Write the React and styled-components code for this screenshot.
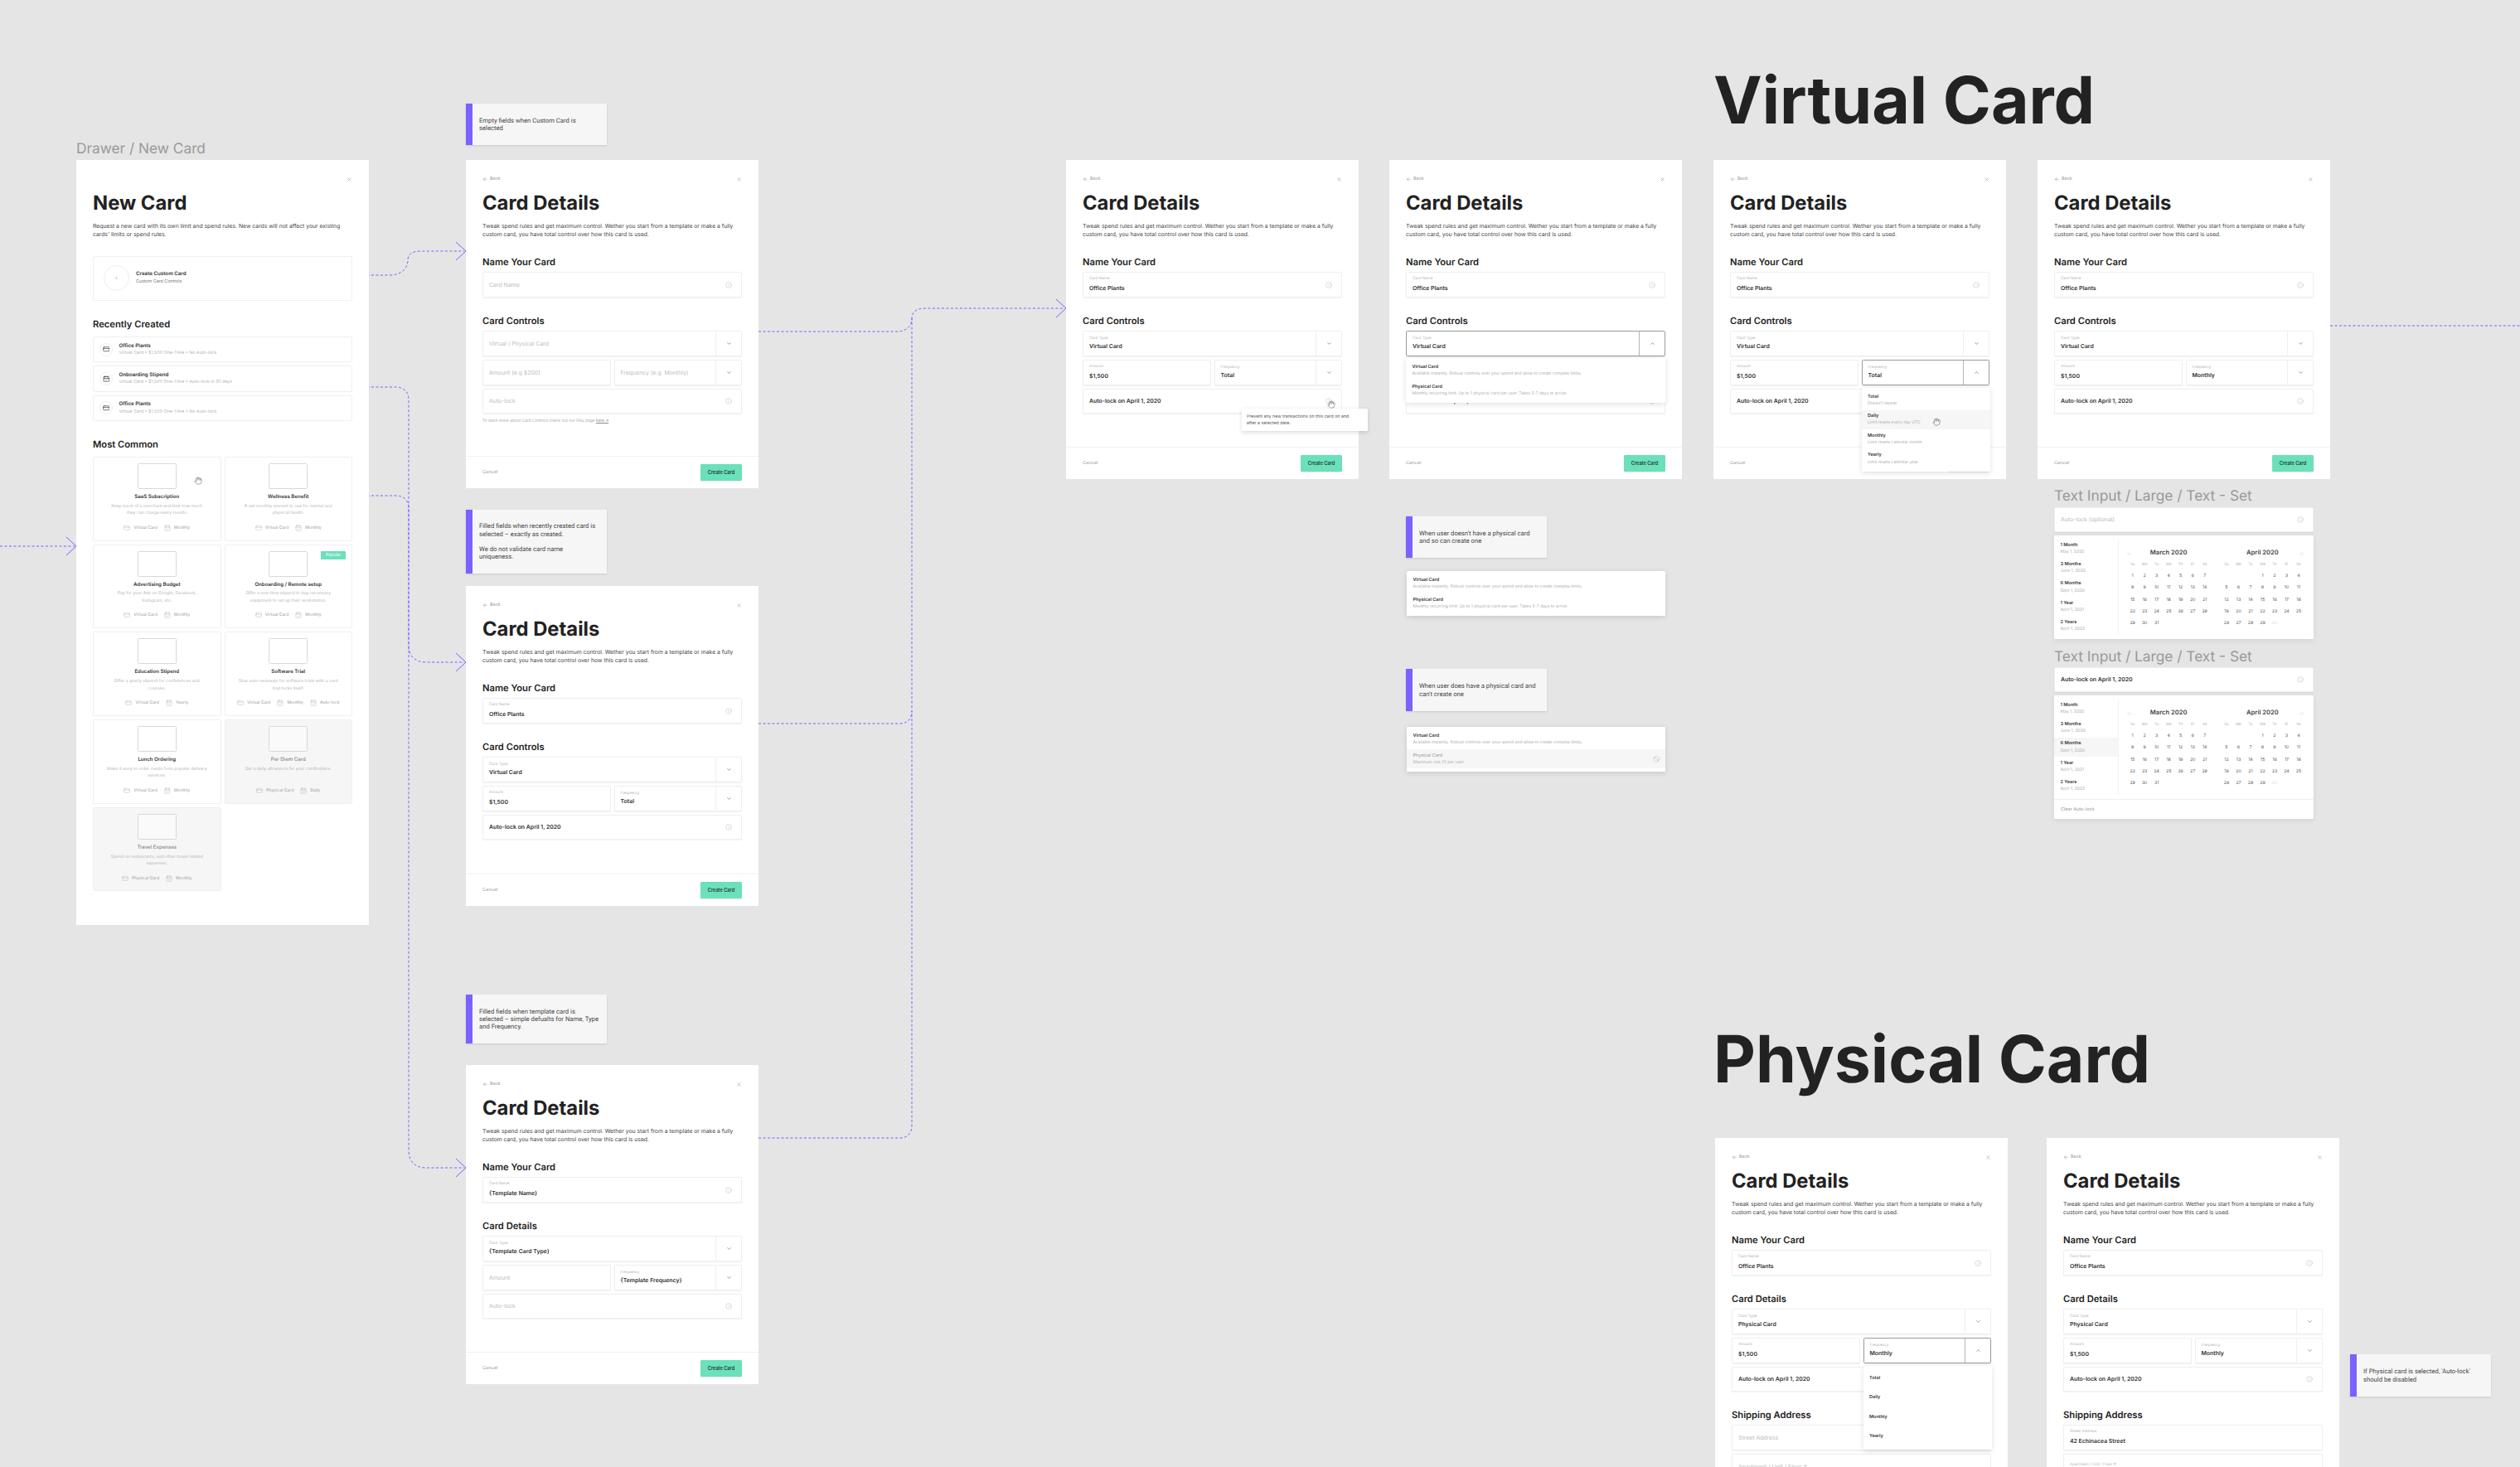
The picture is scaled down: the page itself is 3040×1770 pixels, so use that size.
import React from "react";
import styled, { createGlobalStyle } from "styled-components";
import {
  ArrowLeft,
  ArrowRight,
  Ban,
  CalendarCheck,
  ChevronDown,
  ChevronUp,
  CreditCard,
  Hand,
  Info,
  Plus,
  X,
} from "lucide-react";

const GlobalStyle = createGlobalStyle`
  html, body {
    margin: 0;
    padding: 0;
    background: #e5e5e5;
  }
  body {
    font-family: "Inter", "Liberation Sans", sans-serif;
    color: #222;
    text-rendering: geometricPrecision;
  }
`;

// the page is a Figma board, so frames sit at their own spot on it
const Canvas = styled.div`
  position: relative;
  width: 3040px;
  height: 1770px;
  overflow: hidden;
  background: #e5e5e5;
`;

const Wires = styled.svg`
  position: absolute;
  inset: 0;
`;

const BoardTitle = styled.h1`
  position: absolute;
  left: ${(p) => p.$x}px;
  top: ${(p) => p.$y}px;
  margin: 0;
  font-size: 78.6px;
  line-height: 100px;
  font-weight: 700;
  color: #222;
  white-space: nowrap;
`;

const FrameLabel = styled.div`
  position: absolute;
  left: ${(p) => p.$x}px;
  top: ${(p) => p.$y}px;
  font-size: 17.3px;
  line-height: 22px;
  color: #999;
  white-space: nowrap;
`;

const Note = styled.div`
  position: absolute;
  left: ${(p) => p.$x}px;
  top: ${(p) => p.$y}px;
  width: 170px;
  height: ${(p) => p.$h}px;
  box-sizing: border-box;
  display: flex;
  flex-direction: column;
  justify-content: center;
  padding-left: 8px;
  background: #f6f6f6;
  border-left: 8px solid #7b61ff;
  box-shadow: 0 1px 2px rgba(0, 0, 0, 0.12);
  font-family: "Roboto", "Liberation Sans", sans-serif;
  font-size: 7.7px;
  line-height: 9.3px;
  color: #444;
  white-space: pre-line;
`;

const Drawer = styled.section`
  position: absolute;
  left: ${(p) => p.$x}px;
  top: ${(p) => p.$y}px;
  width: 353px;
  height: ${(p) => p.$h}px;
  box-sizing: border-box;
  display: flex;
  flex-direction: column;
  padding: 18px 20px 0;
  background: #fff;
`;

const TopBar = styled.div`
  display: flex;
  align-items: center;
  justify-content: ${(p) => (p.$end ? "flex-end" : "space-between")};
  height: 10px;
  color: #999;
  font-size: 5.5px;
`;

const BackLink = styled.span`
  display: flex;
  align-items: center;
  gap: 2.5px;
  color: #999;
`;

const Title = styled.h2`
  margin: 9px 0 0;
  font-size: 23.8px;
  line-height: 30px;
  font-weight: 700;
  color: #222;
`;

const Lead = styled.p`
  margin: 7.7px 0 0;
  font-size: 6.8px;
  line-height: 10.67px;
  color: #444;
  white-space: pre-line;
`;

const SectionHead = styled.h3`
  margin: ${(p) => p.$top ?? 21}px 0 ${(p) => p.$bottom ?? 5}px;
  font-size: 11.2px;
  line-height: 14px;
  font-weight: 600;
  color: #222;
`;

const Stack = styled.div`
  display: flex;
  flex-direction: column;
  gap: 4px;
`;

const Row = styled.div`
  display: grid;
  grid-template-columns: minmax(0, 1fr) minmax(0, 1fr);
  gap: 4px;
`;

const FieldBox = styled.div`
  flex: none;
  height: ${(p) => p.$h ?? 31}px;
  box-sizing: border-box;
  display: flex;
  align-items: stretch;
  background: #fff;
  border: 1px solid ${(p) => (p.$open ? "#9a9a9a" : "#efefef")};
  border-radius: 1.5px;
  box-shadow: 0 0.5px 1px rgba(0, 0, 0, 0.06);
`;

const FieldText = styled.div`
  flex: 1;
  min-width: 0;
  display: flex;
  flex-direction: column;
  justify-content: center;
  gap: ${(p) => (p.$tight ? 0.2 : 2.2)}px;
  padding: 0 7px 1px;
`;

const FieldLabel = styled.span`
  font-size: 4.6px;
  line-height: 6px;
  color: #b5b5b5;
`;

const FieldValue = styled.span`
  font-size: 6.9px;
  line-height: 9px;
  font-weight: 600;
  color: #333;
  white-space: nowrap;
`;

const Placeholder = styled.span`
  font-size: 6.9px;
  line-height: 9px;
  color: #bdbdbd;
  white-space: nowrap;
`;

const FieldSlot = styled.div`
  flex: 0 0 30px;
  display: flex;
  align-items: center;
  justify-content: center;
  color: ${(p) => (p.$muted ? "#aaa" : "#555")};
  border-left: ${(p) =>
    p.$divider ? `1px solid ${p.$open ? "#b5b5b5" : "#efefef"}` : "none"};
`;

const Hint = styled.p`
  margin: 5.5px 0 0;
  font-size: 4.85px;
  line-height: 6px;
  color: #aaa;

  u {
    color: #888;
  }
`;

const Footer = styled.footer`
  margin: auto -20px 0;
  height: 39.3px;
  box-sizing: border-box;
  display: flex;
  align-items: center;
  justify-content: space-between;
  padding: 0 20px;
  border-top: 1px solid #f1f1f1;
`;

const CancelLink = styled.span`
  font-size: 5.6px;
  color: #999;
`;

const CreateButton = styled.button`
  width: 50px;
  height: 19.5px;
  padding: 0;
  border: none;
  border-radius: 1.5px;
  background: #6be0bb;
  box-shadow: 0 0.5px 1px rgba(0, 0, 0, 0.1);
  font-family: inherit;
  font-size: 5.6px;
  font-weight: 600;
  color: #1f3d33;
`;

const Menu = styled.div`
  width: ${(p) => p.$w ?? 155}px;
  box-sizing: border-box;
  padding: 3.3px 0;
  background: #fff;
  border-radius: 1.5px;
  box-shadow: 0 1.5px 6px rgba(0, 0, 0, 0.12);
`;

const BoardMenu = styled(Menu)`
  position: absolute;
  left: ${(p) => p.$x}px;
  top: ${(p) => p.$y}px;
`;

const Popover = styled(Menu)`
  position: absolute;
  left: ${(p) => p.$x}px;
  top: ${(p) => p.$y}px;
  z-index: 2;
`;

const MenuRow = styled.div`
  height: 23.6px;
  box-sizing: border-box;
  display: flex;
  align-items: center;
  justify-content: space-between;
  padding: 0 7.5px;
  background: ${(p) => (p.$shaded ? "#f6f6f6" : "transparent")};
  color: #999;
`;

const MenuText = styled.div`
  display: flex;
  flex-direction: column;
  gap: 1.7px;
`;

const MenuTitle = styled.span`
  font-size: 5.5px;
  line-height: 6.5px;
  font-weight: ${(p) => (p.$off ? 400 : 600)};
  color: ${(p) => (p.$off ? "#999" : "#333")};
`;

const MenuSub = styled.span`
  font-size: 5px;
  line-height: 6px;
  color: #b0b0b0;
  white-space: nowrap;
`;

const Tooltip = styled.div`
  position: absolute;
  left: 212px;
  top: 300px;
  z-index: 2;
  width: 152px;
  height: 27px;
  box-sizing: border-box;
  padding: 5.5px 6px;
  background: #fff;
  border-radius: 1px;
  box-shadow: 0 1.5px 5px rgba(0, 0, 0, 0.14);
  font-size: 5.3px;
  line-height: 8.2px;
  color: #555;
`;

const Cursor = styled.span`
  position: absolute;
  left: ${(p) => p.$x}px;
  top: ${(p) => p.$y}px;
  z-index: 3;
  display: flex;
  color: #555;
`;

// new card drawer

const CustomBox = styled.div`
  height: 54px;
  flex: none;
  margin-top: 19.7px;
  box-sizing: border-box;
  display: flex;
  align-items: center;
  gap: 8.5px;
  padding-left: 11.5px;
  border: 1px solid #efefef;
  border-radius: 1.5px;
`;

const PlusCircle = styled.span`
  width: 31px;
  height: 31px;
  box-sizing: border-box;
  display: flex;
  align-items: center;
  justify-content: center;
  border: 1px solid #eee;
  border-radius: 50%;
  color: #aaa;
`;

const TwoLines = styled.div`
  display: flex;
  flex-direction: column;
  gap: ${(p) => p.$gap ?? 2.5}px;
`;

const ItemTitle = styled.span`
  font-size: 6.2px;
  line-height: 7px;
  font-weight: 600;
  color: #333;
`;

const ItemSub = styled.span`
  font-size: 5.3px;
  line-height: 7px;
  color: ${(p) => p.$color ?? "#b5b5b5"};
`;

const RecentItem = styled.div`
  height: 31.4px;
  box-sizing: border-box;
  display: flex;
  align-items: center;
  gap: 7.5px;
  padding-left: 7px;
  border: 1px solid #efefef;
  border-radius: 1.5px;
`;

const RecentIcon = styled.span`
  width: 16px;
  height: 16px;
  box-sizing: border-box;
  display: flex;
  align-items: center;
  justify-content: center;
  border: 1px solid #eee;
  border-radius: 50%;
  color: #333;
`;

const TemplateGrid = styled.div`
  display: grid;
  grid-template-columns: 1fr 1fr;
  grid-auto-rows: 101.7px;
  gap: 4px;
`;

const TemplateCard = styled.div`
  position: relative;
  display: flex;
  flex-direction: column;
  align-items: center;
  padding-top: 7px;
  box-sizing: border-box;
  background: ${(p) => (p.$off ? "#f6f6f6" : "#fff")};
  border: 1px solid #efefef;
  border-radius: 1.5px;
`;

const Thumb = styled.div`
  width: 47px;
  height: 31px;
  box-sizing: border-box;
  background: ${(p) => (p.$off ? "#fafafa" : "#fff")};
  border: 1px solid #d8d8d8;
  border-radius: 1.5px;
`;

const TemplateName = styled.div`
  margin-top: 6px;
  font-size: 6.1px;
  line-height: 8px;
  font-weight: ${(p) => (p.$off ? 500 : 600)};
  color: ${(p) => (p.$off ? "#888" : "#333")};
`;

const TemplateDesc = styled.div`
  height: 17px;
  margin-top: 2.8px;
  font-size: 5.15px;
  line-height: 8.4px;
  color: #b5b5b5;
  text-align: center;
  white-space: pre-line;
`;

const TemplateMeta = styled.div`
  display: flex;
  gap: 8px;
  margin-top: 9px;
`;

const MetaItem = styled.span`
  display: flex;
  align-items: center;
  gap: 4px;
  font-size: 5.1px;
  color: #999;
  white-space: nowrap;
`;

const PopularBadge = styled.span`
  position: absolute;
  top: 7px;
  right: 7px;
  width: 30px;
  height: 10px;
  display: flex;
  align-items: center;
  justify-content: center;
  background: #6be0bb;
  border-radius: 1px;
  font-size: 5px;
  color: #fff;
`;

// auto-lock date picker

const CalendarPanel = styled.div`
  position: absolute;
  left: ${(p) => p.$x}px;
  top: ${(p) => p.$y}px;
  width: 313px;
  background: #fff;
  border-radius: 1.5px;
  box-shadow: 0 1.5px 6px rgba(0, 0, 0, 0.08);
`;

const InputSlot = styled.div`
  position: absolute;
  left: ${(p) => p.$x}px;
  top: ${(p) => p.$y}px;
  width: 313px;
`;

const CalendarBody = styled.div`
  display: flex;
  height: 125px;
  box-sizing: border-box;
  padding: 4px 0;
`;

const Presets = styled.div`
  flex: 0 0 78px;
  box-sizing: border-box;
  display: flex;
  flex-direction: column;
  border-right: 1px solid #f3f3f3;
`;

const Preset = styled.div`
  height: 23.5px;
  box-sizing: border-box;
  display: flex;
  flex-direction: column;
  justify-content: center;
  gap: 1.7px;
  padding-left: 7.5px;
  background: ${(p) => (p.$on ? "#f6f6f6" : "transparent")};
`;

const Months = styled.div`
  flex: 1;
  display: flex;
  gap: 11.8px;
  padding: 6px 0 0 9.4px;
`;

const Month = styled.div`
  width: 101.5px;
`;

const MonthHead = styled.div`
  display: grid;
  grid-template-columns: 8px 1fr 8px;
  align-items: center;
  height: 17px;
  color: #ccc;
  margin-bottom: 1px;
`;

const MonthName = styled.span`
  font-size: 7.6px;
  font-weight: 600;
  text-align: center;
  color: #444;
`;

const DayGrid = styled.div`
  display: grid;
  grid-template-columns: repeat(7, 14.5px);
  grid-auto-rows: 14.2px;
  align-items: center;
  justify-items: center;
`;

const WeekDay = styled.span`
  font-size: 4.4px;
  color: #b5b5b5;
`;

const Day = styled.span`
  font-size: 5.2px;
  color: ${(p) => (p.$off ? "#ddd" : "#555")};
`;

const ClearRow = styled.div`
  height: 24px;
  box-sizing: border-box;
  display: flex;
  align-items: center;
  padding-left: 8px;
  border-top: 1px solid #efefef;
  font-size: 5.5px;
  color: #999;
`;

const templates = [
  { name: "SaaS Subscription", desc: "Keep track of a merchant and limit how much\nthey can charge every month.", meta: ["Virtual Card", "Monthly"] },
  { name: "Wellness Benefit", desc: "A set monthly amount to use for mental and\nphysical health.", meta: ["Virtual Card", "Monthly"] },
  { name: "Advertising Budget", desc: "Pay for your Ads on Google, Facebook,\nInstagram, etc.", meta: ["Virtual Card", "Monthly"] },
  { name: "Onboarding / Remote setup", desc: "Offer a one-time stipend to buy necessary\nequipment to set up their workstation.", meta: ["Virtual Card", "Monthly"], popular: true },
  { name: "Education Stipend", desc: "Offer a yearly stipend for conferences and\ncourses.", meta: ["Virtual Card", "Yearly"] },
  { name: "Software Trial", desc: "Stop auto-renewals for software trials with a card\nthat locks itself.", meta: ["Virtual Card", "Monthly", "Auto-lock"] },
  { name: "Lunch Ordering", desc: "Make it easy to order meals from popular delivery\nservices.", meta: ["Virtual Card", "Monthly"] },
  { name: "Per Diem Card", desc: "Set a daily allowance for your cardholders.", meta: ["Physical Card", "Daily"], off: true },
  { name: "Travel Expenses", desc: "Spend on restaurants, and other travel related\nexpenses.", meta: ["Physical Card", "Monthly"], off: true },
];

const recents = [
  { name: "Office Plants", sub: "Virtual Card • $1,500 One-Time • No Auto-lock", Icon: CreditCard },
  { name: "Onboarding Stipend", sub: "Virtual Card • $1,500 One-Time • Auto-lock in 30 days", Icon: CalendarCheck },
  { name: "Office Plants", sub: "Virtual Card • $1,500 One-Time • No Auto-lock", Icon: CreditCard },
];

const presets = [
  ["1 Month", "May 1, 2020"],
  ["3 Months", "June 1, 2020"],
  ["6 Months", "Sept 1, 2020"],
  ["1 Year", "April 1, 2021"],
  ["2 Years", "April 1, 2022"],
];

const frequencies = [
  ["Total", "Doesn't repeat"],
  ["Daily", "Limit resets every day UTC"],
  ["Monthly", "Limit resets calendar month"],
  ["Yearly", "Limit resets calendar year"],
];

const LEAD =
  "Tweak spend rules and get maximum control. Wether you start from a template or make a fully\ncustom card, you have total control over how this card is used.";
const WEEK = ["Su", "Mo", "Tu", "We", "Th", "Fr", "Sa"];

const Field = ({ label, value, placeholder, select, open, info, tight, h }) => (
  <FieldBox $open={open} $h={h}>
    <FieldText $tight={tight ?? select}>
      {label && <FieldLabel>{label}</FieldLabel>}
      {value && <FieldValue>{value}</FieldValue>}
      {placeholder && <Placeholder>{placeholder}</Placeholder>}
    </FieldText>
    {select && (
      <FieldSlot $divider $open={open}>
        {open ? <ChevronUp size={7} /> : <ChevronDown size={7} />}
      </FieldSlot>
    )}
    {info && (
      <FieldSlot $muted>
        <Info size={8} strokeWidth={1.2} />
      </FieldSlot>
    )}
  </FieldBox>
);

const ControlFields = ({ type, amount, frequency, auto, typeOpen, freqOpen }) => (
  <Stack>
    <Field select open={typeOpen} {...type} />
    <Row>
      <Field tight={false} {...amount} />
      <Field select open={freqOpen} {...frequency} />
    </Row>
    <Field info h={30} {...auto} />
  </Stack>
);

const filled = {
  name: { label: "Card Name", value: "Office Plants" },
  type: { label: "Card Type", value: "Virtual Card" },
  amount: { label: "Amount", value: "$1,500" },
  total: { label: "Frequency", value: "Total" },
  monthly: { label: "Frequency", value: "Monthly" },
  auto: { value: "Auto-lock on April 1, 2020" },
};

const CardDetails = ({ x, y, h = 385, name, section = "Card Controls", type, amount, frequency, auto, hint, typeOpen, freqOpen, footer = true, showCreate = true, children }) => (
  <Drawer $x={x} $y={y} $h={h}>
    <TopBar>
      <BackLink>
        <ArrowLeft size={6.5} />
        Back
      </BackLink>
      <X size={7} />
    </TopBar>
    <Title>Card Details</Title>
    <Lead>{LEAD}</Lead>
    <SectionHead $top={20}>Name Your Card</SectionHead>
    <Field info {...name} />
    <SectionHead>{section}</SectionHead>
    <ControlFields
      type={type}
      amount={amount}
      frequency={frequency}
      auto={auto}
      typeOpen={typeOpen}
      freqOpen={freqOpen}
    />
    {hint && (
      <Hint>
        To learn more about Card Controls check out our FAQ page <u>here ↗</u>
      </Hint>
    )}
    {children}
    {footer && (
      <Footer>
        <CancelLink>Cancel</CancelLink>
        {showCreate && <CreateButton>Create Card</CreateButton>}
      </Footer>
    )}
  </Drawer>
);

const NewCardDrawer = () => (
  <Drawer $x={92} $y={193} $h={923}>
    <TopBar $end>
      <X size={7} />
    </TopBar>
    <Title>New Card</Title>
    <Lead>
      {"Request a new card with its own limit and spend rules. New cards will not affect your existing\ncards' limits or spend rules."}
    </Lead>
    <CustomBox>
      <PlusCircle>
        <Plus size={7} strokeWidth={1.2} />
      </PlusCircle>
      <TwoLines>
        <ItemTitle>Create Custom Card</ItemTitle>
        <ItemSub $color="#777">Custom Card Controls</ItemSub>
      </TwoLines>
    </CustomBox>
    <SectionHead $top={21} $bottom={8.3}>Recently Created</SectionHead>
    <Stack>
      {recents.map((item, i) => (
        <RecentItem key={i}>
          <RecentIcon>
            <item.Icon size={8.5} strokeWidth={1.8} />
          </RecentIcon>
          <TwoLines $gap={2.2}>
            <ItemTitle>{item.name}</ItemTitle>
            <ItemSub>{item.sub}</ItemSub>
          </TwoLines>
        </RecentItem>
      ))}
    </Stack>
    <SectionHead $top={20.8} $bottom={8}>Most Common</SectionHead>
    <TemplateGrid>
      {templates.map((t) => (
        <TemplateCard key={t.name} $off={t.off}>
          {t.popular && <PopularBadge>Popular</PopularBadge>}
          <Thumb $off={t.off} />
          <TemplateName $off={t.off}>{t.name}</TemplateName>
          <TemplateDesc>{t.desc}</TemplateDesc>
          <TemplateMeta>
            {t.meta.map((m, i) => (
              <MetaItem key={m}>
                {i === 0 ? (
                  <CreditCard size={8} strokeWidth={1} />
                ) : (
                  <CalendarCheck size={8} strokeWidth={1} />
                )}
                {m}
              </MetaItem>
            ))}
          </TemplateMeta>
        </TemplateCard>
      ))}
    </TemplateGrid>
  </Drawer>
);

const MonthTable = ({ name, lead, days, dimLast, arrow }) => (
  <Month>
    <MonthHead>
      <span>{arrow === "left" && <ArrowLeft size={8} strokeWidth={1} />}</span>
      <MonthName>{name}</MonthName>
      <span>{arrow === "right" && <ArrowRight size={8} strokeWidth={1} />}</span>
    </MonthHead>
    <DayGrid>
      {WEEK.map((d) => (
        <WeekDay key={d}>{d}</WeekDay>
      ))}
      {Array.from({ length: lead }, (_, i) => (
        <span key={"e" + i} />
      ))}
      {Array.from({ length: days }, (_, i) => (
        <Day key={i} $off={dimLast && i === days - 1}>
          {i + 1}
        </Day>
      ))}
    </DayGrid>
  </Month>
);

const DatePicker = ({ x, y, active, clear }) => (
  <CalendarPanel $x={x} $y={y}>
    <CalendarBody>
      <Presets>
        {presets.map(([title, date], i) => (
          <Preset key={title} $on={i === active}>
            <MenuTitle>{title}</MenuTitle>
            <MenuSub>{date}</MenuSub>
          </Preset>
        ))}
      </Presets>
      <Months>
        <MonthTable name="March 2020" lead={0} days={31} arrow="left" />
        <MonthTable name="April 2020" lead={3} days={30} dimLast arrow="right" />
      </Months>
    </CalendarBody>
    {clear && <ClearRow>Clear Auto-lock</ClearRow>}
  </CalendarPanel>
);

const ArrowHead = ({ x, y }) => (
  <path d={`M${x - 12} ${y - 11}L${x} ${y}L${x - 12} ${y + 11}`} fill="none" stroke="#7b61ff" strokeWidth="1" />
);

const Connectors = () => (
  <Wires width="3040" height="1770" viewBox="0 0 3040 1770">
    <g fill="none" stroke="#7b61ff" strokeWidth="1" strokeDasharray="3 2.5">
      <path d="M0 659H90" />
      <path d="M426 332H470C484 332 492 324 492 314C492 306 498 303 508 303H560" />
      <path d="M426 467H478C487 467 493 473 493 482V778C493 791 500 799 514 799H560" />
      <path d="M426 598H478C487 598 493 604 493 613V1388C493 1401 500 1409 514 1409H560" />
      <path d="M915 400H1082C1093 400 1100 394 1100 384C1100 376 1106 372 1116 372H1284" />
      <path d="M915 873H1086C1095 873 1100 867 1100 858V384" />
      <path d="M915 1373H1086C1095 1373 1100 1367 1100 1358V858" />
      <path d="M2811 393H3040" />
    </g>
    <ArrowHead x={92} y={659} />
    <ArrowHead x={562} y={303} />
    <ArrowHead x={562} y={799} />
    <ArrowHead x={562} y={1409} />
    <ArrowHead x={1286} y={372} />
  </Wires>
);

const noteProps = {
  custom: "Empty fields when Custom Card is\nselected",
  recent: "Filled fields when recently created card is\nselected – exactly as created.\n\nWe do not validate card name\nuniqueness.",
  template: "Filled fields when template card is\nselected – simple defualts for Name, Type\nand Frequency.",
  noPhysical: "When user doesn't have a physical card\nand so can create one",
  hasPhysical: "When user does have a physical card and\ncan't create one",
  autoLock: "If Physical card is selected, 'Auto-lock'\nshould be disabled",
};

const cardTypeRows = (
  <MenuRow>
    <MenuText>
      <MenuTitle>Virtual Card</MenuTitle>
      <MenuSub>Available instantly. Robust controls over your spend and allow to create complex limits.</MenuSub>
    </MenuText>
  </MenuRow>
);

const PhysicalFields = ({ street, apartment }) => (
  <>
    <SectionHead>Shipping Address</SectionHead>
    <Stack>
      <Field {...street} />
      <Field {...apartment} />
    </Stack>
  </>
);

export default function App() {
  return (
    <Canvas>
      <GlobalStyle />
      <Connectors />

      <BoardTitle $x={2067} $y={71}>Virtual Card</BoardTitle>
      <BoardTitle $x={2067} $y={1228}>Physical Card</BoardTitle>

      <FrameLabel $x={92} $y={169}>Drawer / New Card</FrameLabel>
      <NewCardDrawer />
      <Cursor $x={234} $y={575}>
        <Hand size={10} strokeWidth={1.2} />
      </Cursor>

      <Note $x={562} $y={125} $h={50}>{noteProps.custom}</Note>
      <CardDetails
        x={562}
        y={193}
        h={396}
        hint
        name={{ placeholder: "Card Name" }}
        type={{ placeholder: "Virtual / Physical Card" }}
        amount={{ placeholder: "Amount (e.g $200)" }}
        frequency={{ placeholder: "Frequency (e.g. Monthly)" }}
        auto={{ placeholder: "Auto-lock" }}
      />

      <Note $x={562} $y={615} $h={77}>{noteProps.recent}</Note>
      <CardDetails
        x={562}
        y={707}
        h={386}
        name={filled.name}
        type={filled.type}
        amount={filled.amount}
        frequency={filled.total}
        auto={filled.auto}
      />

      <Note $x={562} $y={1200} $h={59}>{noteProps.template}</Note>
      <CardDetails
        x={562}
        y={1285}
        section="Card Details"
        name={{ label: "Card Name", value: "{Template Name}" }}
        type={{ label: "Card Type", value: "{Template Card Type}" }}
        amount={{ placeholder: "Amount" }}
        frequency={{ label: "Frequency", value: "{Template Frequency}" }}
        auto={{ placeholder: "Auto-lock" }}
      />

      <CardDetails
        x={1286}
        y={193}
        name={filled.name}
        type={filled.type}
        amount={filled.amount}
        frequency={filled.total}
        auto={filled.auto}
      >
        <Tooltip>
          Prevent any new transactions on this card on and
          <br />
          after a selected date.
        </Tooltip>
      </CardDetails>
      <Cursor $x={1601} $y={483}>
        <Hand size={10} strokeWidth={1.2} />
      </Cursor>

      <CardDetails
        x={1676}
        y={193}
        typeOpen
        name={filled.name}
        type={filled.type}
        amount={filled.amount}
        frequency={filled.total}
        auto={filled.auto}
      >
        <Popover $x={20} $y={239} $w={313}>
          {cardTypeRows}
          <MenuRow>
            <MenuText>
              <MenuTitle>Physical Card</MenuTitle>
              <MenuSub>Monthly recurring limit. Up to 1 physical card per user. Takes 5-7 days to arrive.</MenuSub>
            </MenuText>
          </MenuRow>
        </Popover>
      </CardDetails>

      <CardDetails
        x={2067}
        y={193}
        freqOpen
        name={filled.name}
        type={filled.type}
        amount={filled.amount}
        frequency={filled.total}
        auto={filled.auto}
      >
        <Popover $x={178.5} $y={274.7}>
          {frequencies.map(([title, sub], i) => (
            <MenuRow key={title} $shaded={i === 1}>
              <MenuText>
                <MenuTitle>{title}</MenuTitle>
                <MenuSub>{sub}</MenuSub>
              </MenuText>
            </MenuRow>
          ))}
        </Popover>
      </CardDetails>
      <Cursor $x={2331} $y={504}>
        <Hand size={10} strokeWidth={1.2} />
      </Cursor>

      <CardDetails
        x={2458}
        y={193}
        name={filled.name}
        type={filled.type}
        amount={filled.amount}
        frequency={filled.monthly}
        auto={filled.auto}
      />

      <Note $x={1696} $y={623} $h={50}>{noteProps.noPhysical}</Note>
      <BoardMenu $x={1697} $y={689} $w={312}>
        {cardTypeRows}
        <MenuRow>
          <MenuText>
            <MenuTitle>Physical Card</MenuTitle>
            <MenuSub>Monthly recurring limit. Up to 1 physical card per user. Takes 5-7 days to arrive.</MenuSub>
          </MenuText>
        </MenuRow>
      </BoardMenu>

      <Note $x={1696} $y={807} $h={51}>{noteProps.hasPhysical}</Note>
      <BoardMenu $x={1697} $y={877} $w={312}>
        {cardTypeRows}
        <MenuRow $shaded>
          <MenuText>
            <MenuTitle $off>Physical Card</MenuTitle>
            <MenuSub>Maximum one (1) per user</MenuSub>
          </MenuText>
          <Ban size={8} strokeWidth={1} />
        </MenuRow>
      </BoardMenu>

      <FrameLabel $x={2478} $y={588}>Text Input / Large / Text - Set</FrameLabel>
      <InputSlot $x={2478} $y={612}>
        <Field info h={30} placeholder="Auto-lock (optional)" />
      </InputSlot>
      <DatePicker x={2478} y={646} />

      <FrameLabel $x={2478} $y={782}>Text Input / Large / Text - Set</FrameLabel>
      <InputSlot $x={2478} $y={805}>
        <Field info h={30} value="Auto-lock on April 1, 2020" />
      </InputSlot>
      <DatePicker x={2478} y={839} active={2} clear />

      <CardDetails
        x={2069}
        y={1373}
        h={500}
        freqOpen
        section="Card Details"
        footer={false}
        name={filled.name}
        type={{ label: "Card Type", value: "Physical Card" }}
        amount={filled.amount}
        frequency={filled.monthly}
        auto={filled.auto}
      >
        <PhysicalFields
          street={{ placeholder: "Street Address" }}
          apartment={{ placeholder: "Apartment / Unit / Floor #" }}
        />
        <Popover $x={178.5} $y={274.7}>
          {frequencies.map(([title]) => (
            <MenuRow key={title}>
              <MenuTitle>{title}</MenuTitle>
            </MenuRow>
          ))}
        </Popover>
      </CardDetails>

      <CardDetails
        x={2469}
        y={1373}
        h={500}
        section="Card Details"
        footer={false}
        name={filled.name}
        type={{ label: "Card Type", value: "Physical Card" }}
        amount={filled.amount}
        frequency={filled.monthly}
        auto={filled.auto}
      >
        <PhysicalFields
          street={{ label: "Street Address", value: "42 Echinacea Street" }}
          apartment={{ label: "Apartment / Unit / Floor #", value: " " }}
        />
      </CardDetails>

      <Note $x={2835} $y={1634} $h={51}>{noteProps.autoLock}</Note>
    </Canvas>
  );
}
